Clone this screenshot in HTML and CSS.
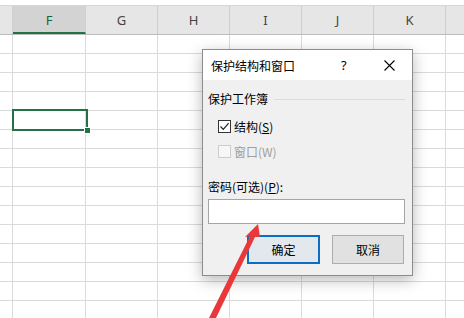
FILE: index.html
```html
<!DOCTYPE html>
<html lang="zh-CN">
<head>
  <meta charset="UTF-8">
  <meta name="viewport" content="width=device-width, initial-scale=1.0">
  <title>保护结构和窗口</title>
  <link rel="stylesheet" href="styles.css">
</head>
<body>
  <div class="sheet">
    <div class="col-head">
      <div class="corner"></div>
      <div class="col first sel">F</div>
      <div class="col">G</div>
      <div class="col">H</div>
      <div class="col">I</div>
      <div class="col">J</div>
      <div class="col">K</div>
      <div class="col rest"></div>
    </div>
    <div class="cells">
      <div class="corner"></div>
      <div class="col first"></div>
      <div class="col"></div>
      <div class="col"></div>
      <div class="col"></div>
      <div class="col"></div>
      <div class="col"></div>
      <div class="col rest"></div>
      <!-- selected cell F5 -->
      <div class="active-cell"><span class="handle"></span></div>
    </div>
  </div>

  <!-- Protect structure dialog -->
  <div class="dialog">
    <div class="dlg-title">
      <span class="dlg-caption">保护结构和窗口</span>
      <span class="dlg-help">?</span>
      <span class="dlg-close">
        <svg width="11" height="11" viewBox="0 0 11 11"><path d="M0.5 0.5L10.5 10.5M10.5 0.5L0.5 10.5" stroke="#000" stroke-width="1.1" fill="none"/></svg>
      </span>
    </div>
    <div class="dlg-body">
      <div class="group-title">保护工作簿</div>
      <div class="check first-check">
        <span class="box">
          <svg width="11" height="11" viewBox="0 0 11 11"><path d="M1.5 5.5L4.3 8.3L9.6 2.2" stroke="#222" stroke-width="1.2" fill="none"/></svg>
        </span>
        <span>结构(<u>S</u>)</span>
      </div>
      <div class="check disabled">
        <span class="box"></span>
        <span>窗口(W)</span>
      </div>
      <div class="pw-label">密码(可选)(<u>P</u>):</div>
      <div class="pw-input"></div>
      <div class="buttons">
        <button class="btn default">确定</button>
        <button class="btn">取消</button>
      </div>
    </div>
  </div>

  <svg class="arrow" width="464" height="318" viewBox="0 0 464 318">
    <polygon points="209,318 250,236 245,237 258,224 260,237 255,237 216,318" fill="#e8383b"/>
  </svg>
</body>
</html>
```

FILE: styles.css
```css
body {
  margin: 0;
  width: 464px;
  height: 318px;
  overflow: hidden;
  background: #fff;
  font-family: "Noto Sans CJK SC", "Noto Sans", sans-serif;
  position: relative;
}

.sheet {
  padding-top: 5px;
}

.col-head,
.cells {
  display: flex;
}

.col-head {
  height: 28px;
  background: #e6e6e6;
  border-top: 1px solid #d6d6d6;
  border-bottom: 1px solid #bcbcbc;
  font-family: "Noto Sans", sans-serif;
  font-size: 13px;
  color: #444;
}

.corner {
  width: 13px;
  flex: none;
  box-sizing: border-box;
  border-right: 1px solid #cfcfcf;
}

.col {
  width: 72px;
  flex: none;
  box-sizing: border-box;
  border-right: 1px solid #cfcfcf;
  display: flex;
  align-items: center;
  justify-content: center;
}

.col.first {
  width: 73px;
}

.col.rest {
  flex: 1;
  border-right: none;
}

.col-head .sel {
  background: #d3d3d3;
  color: #1f5f3c;
  border-bottom: 2px solid #217346;
  padding-top: 2px;
}

.cells {
  position: relative;
  height: 284px;
  background: repeating-linear-gradient(to bottom, transparent 0 18px, #dadada 18px 19px);
}

.cells .corner,
.cells .col {
  border-right-color: #dadada;
}

.active-cell {
  position: absolute;
  left: 12px;
  top: 74px;
  width: 72px;
  height: 18px;
  border: 2px solid #217346;
}

.handle {
  position: absolute;
  right: -5px;
  bottom: -5px;
  width: 5px;
  height: 5px;
  background: #217346;
  border: 1px solid #fff;
}

/* Dialog */
.dialog {
  position: absolute;
  left: 202px;
  top: 49px;
  width: 211px;
  height: 227px;
  box-sizing: border-box;
  border: 1px solid #8c8c8c;
  background: #f0f0f0;
  box-shadow: 0 4px 14px rgba(0, 0, 0, 0.28);
  font-size: 12px;
  color: #000;
}

.dlg-title {
  height: 30px;
  background: #fff;
  display: flex;
  align-items: center;
  padding-left: 8px;
}

.dlg-caption {
  flex: 1;
}

.dlg-help {
  width: 14px;
  font-family: "Noto Sans", sans-serif;
  font-size: 13px;
  margin-right: 29px;
}

.dlg-close {
  width: 11px;
  height: 11px;
  margin-right: 17px;
  display: flex;
}

.dlg-body {
  padding: 11px 7px 0 5px;
}

.group-title {
  height: 16px;
  line-height: 16px;
  display: flex;
  align-items: center;
  gap: 6px;
}

.group-title::after {
  content: "";
  flex: 1;
  height: 1px;
  background: #dcdcdc;
}

.check {
  margin-left: 10px;
  height: 16px;
  display: flex;
  align-items: center;
  gap: 3px;
}

.first-check {
  margin-top: 11px;
}

.check.disabled {
  margin-top: 9px;
  color: #a0a0a0;
}

.box {
  width: 13px;
  height: 13px;
  box-sizing: border-box;
  border: 1px solid #333;
  background: #fff;
  display: flex;
  align-items: center;
  justify-content: center;
}

.disabled .box {
  border-color: #cccccc;
  background: #f7f7f7;
}

.pw-label {
  margin-top: 20px;
  height: 16px;
  line-height: 16px;
}

.pw-input {
  margin-top: 4px;
  height: 25px;
  box-sizing: border-box;
  border: 1px solid #a5a5a5;
  background: #fff;
}

.buttons {
  margin-top: 11px;
  display: flex;
  justify-content: flex-end;
  gap: 12px;
  padding-right: 1px;
}

.btn {
  width: 72px;
  height: 29px;
  box-sizing: border-box;
  border: 1px solid #adadad;
  background: #e1e1e1;
  font-family: inherit;
  font-size: 12px;
  color: #000;
  padding: 0;
}

.btn.default {
  width: 73px;
  border: 2px solid #0a6fc2;
  background: #e3e8ee;
}

.arrow {
  position: absolute;
  left: 0;
  top: 0;
}
```
